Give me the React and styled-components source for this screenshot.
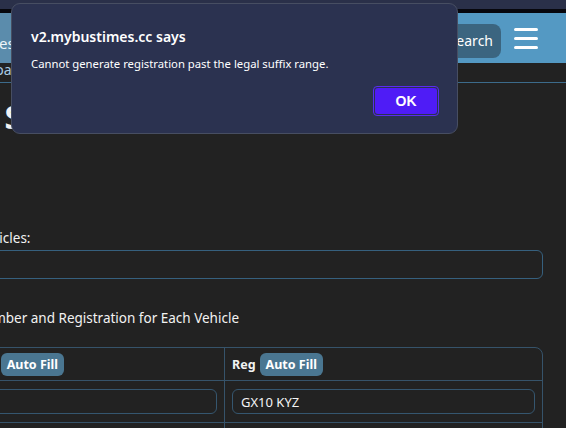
import React from 'react';
import styled, { createGlobalStyle } from 'styled-components';

const Global = createGlobalStyle`
  body {
    margin: 0;
    background: #222222;
    font-family: "Noto Sans", "Open Sans", sans-serif;
    color: #f2f2f2;
    overflow: hidden;
  }
`;

const Screen = styled.div`
  position: relative;
  width: 566px;
  height: 428px;
  overflow: hidden;
  background: #222222;
`;

const BrowserStrip = styled.div`
  height: 9px;
  background: #2a3049;
`;

const BlackStrip = styled.div`
  height: 4px;
  background: #07070d;
`;

const Navbar = styled.div`
  height: 50px;
  background: #5499c3;
  display: flex;
  align-items: center;
`;

const NavLeft = styled.div`
  width: 11px;
  height: 100%;
  background: #5b8cac;
  display: flex;
  align-items: center;
  overflow: hidden;
  flex-shrink: 0;
`;

const NavTitle = styled.span`
  font-size: 15px;
  color: #eef4f8;
  white-space: nowrap;
  margin-left: -34px;
  margin-top: 9px;
`;

const NavRight = styled.div`
  margin-left: auto;
  display: flex;
  align-items: center;
  gap: 13px;
  padding-right: 28px;
`;

const SearchButton = styled.button`
  height: 34px;
  padding: 0 8px 0 10px;
  border: none;
  border-radius: 8px;
  background: #3b6580;
  color: #ffffff;
  font-family: inherit;
  font-size: 14px;
  margin-top: 5px;
`;

const Burger = styled.div`
  display: flex;
  flex-direction: column;
  gap: 6px;
  width: 24px;
  span {
    display: block;
    height: 3px;
    border-radius: 2px;
    background: #ffffff;
  }
`;

const SubBar = styled.div`
  height: 19px;
  border-bottom: 1px solid #3c6b8b;
  overflow: hidden;
`;

const SubText = styled.span`
  display: block;
  font-size: 14px;
  line-height: 13px;
  color: #a9cbe2;
  white-space: nowrap;
  margin-left: -12px;
`;

const Content = styled.div`
  margin-left: -97px;
  width: 640px;
`;

const Heading = styled.h1`
  margin: 14px 0 0 0;
  padding-left: 14px;
  font-size: 32px;
  line-height: 40px;
  font-weight: 700;
`;

const Label = styled.div`
  font-size: 13.5px;
  line-height: 20px;
  margin-top: ${p => p.$top}px;
`;

const TextInput = styled.div`
  box-sizing: border-box;
  height: ${p => p.$h || 29}px;
  margin-top: ${p => p.$top || 0}px;
  border: 1px solid ${p => p.$border || '#35566f'};
  border-radius: 6px;
  display: flex;
  align-items: center;
  padding: 0 8px;
  font-size: 13px;
  font-weight: 400;
  color: #f4f4f4;
`;

const Table = styled.div`
  margin-top: 19px;
  border: 1px solid #36536a;
  border-radius: 8px;
  display: grid;
  grid-template-columns: 320px 1fr;
`;

const Cell = styled.div`
  box-sizing: border-box;
  height: ${p => p.$h}px;
  padding: 0 7px;
  display: flex;
  align-items: center;
  gap: 4px;
  border-left: ${p => (p.$right ? '1px solid #36536a' : 'none')};
  border-top: ${p => (p.$first ? 'none' : '1px solid #36536a')};
  font-size: 12.5px;
  font-weight: 700;
  > div { flex: 1; }
`;

const AutoFill = styled.button`
  height: 23px;
  padding: 0 6px;
  border: none;
  border-radius: 6px;
  background: #4a7691;
  color: #ffffff;
  font-family: inherit;
  font-size: 12.5px;
  font-weight: 700;
`;

const Dialog = styled.div`
  position: absolute;
  left: 11px;
  top: 3px;
  width: 447px;
  height: 131px;
  box-sizing: border-box;
  background: #2b3250;
  border: 1px solid #474e62;
  border-radius: 9px;
  padding: 23px 18px 0 19px;
  display: flex;
  flex-direction: column;
`;

const DialogTitle = styled.div`
  font-size: 14px;
  font-weight: 600;
  color: #ffffff;
  line-height: 20px;
`;

const DialogText = styled.div`
  margin-top: 9px;
  font-size: 11.3px;
  color: #ffffff;
  line-height: 16px;
`;

const DialogActions = styled.div`
  display: flex;
  justify-content: flex-end;
  margin-top: 14px;
`;

const OkButton = styled.button`
  width: 66px;
  height: 30px;
  border: 1px solid #5a2cf0;
  border-radius: 4px;
  padding: 1px;
  background: #2b3250;
  div {
    height: 100%;
    border-radius: 3px;
    background: #4f1cf6;
    color: #ffffff;
    font-family: inherit;
    font-weight: 700;
    font-size: 14px;
    display: flex;
    align-items: center;
    justify-content: center;
  }
`;

export default function App() {
  return (
    <>
      <Global />
      <Screen>
        <BrowserStrip />
        <BlackStrip />
        <Navbar>
          <NavLeft>
            <NavTitle>Routes</NavTitle>
          </NavLeft>
          <NavRight>
            <SearchButton>Search</SearchButton>
            <Burger>
              <span />
              <span />
              <span />
            </Burger>
          </NavRight>
        </Navbar>
        <SubBar>
          <SubText>Load</SubText>
        </SubBar>
        <Content>
          <Heading>Fleet Stock</Heading>
          <Label $top={91}>Number of Vehicles:</Label>
          <TextInput $top={2} $border="#36607e" />
          <Label $top={29}>Enter Fleet Number and Registration for Each Vehicle</Label>
          <Table>
            <Cell $first $h={32}>
              Fleet Number <AutoFill>Auto Fill</AutoFill>
            </Cell>
            <Cell $first $right $h={32}>
              Reg <AutoFill>Auto Fill</AutoFill>
            </Cell>
            <Cell $h={42}>
              <TextInput $h={25} />
            </Cell>
            <Cell $right $h={42}>
              <TextInput $h={25}>GX10 KYZ</TextInput>
            </Cell>
            <Cell $h={42}>
              <TextInput $h={25} />
            </Cell>
            <Cell $right $h={42}>
              <TextInput $h={25} />
            </Cell>
          </Table>
        </Content>
        <Dialog>
          <DialogTitle>v2.mybustimes.cc says</DialogTitle>
          <DialogText>Cannot generate registration past the legal suffix range.</DialogText>
          <DialogActions>
            <OkButton><div>OK</div></OkButton>
          </DialogActions>
        </Dialog>
      </Screen>
    </>
  );
}
